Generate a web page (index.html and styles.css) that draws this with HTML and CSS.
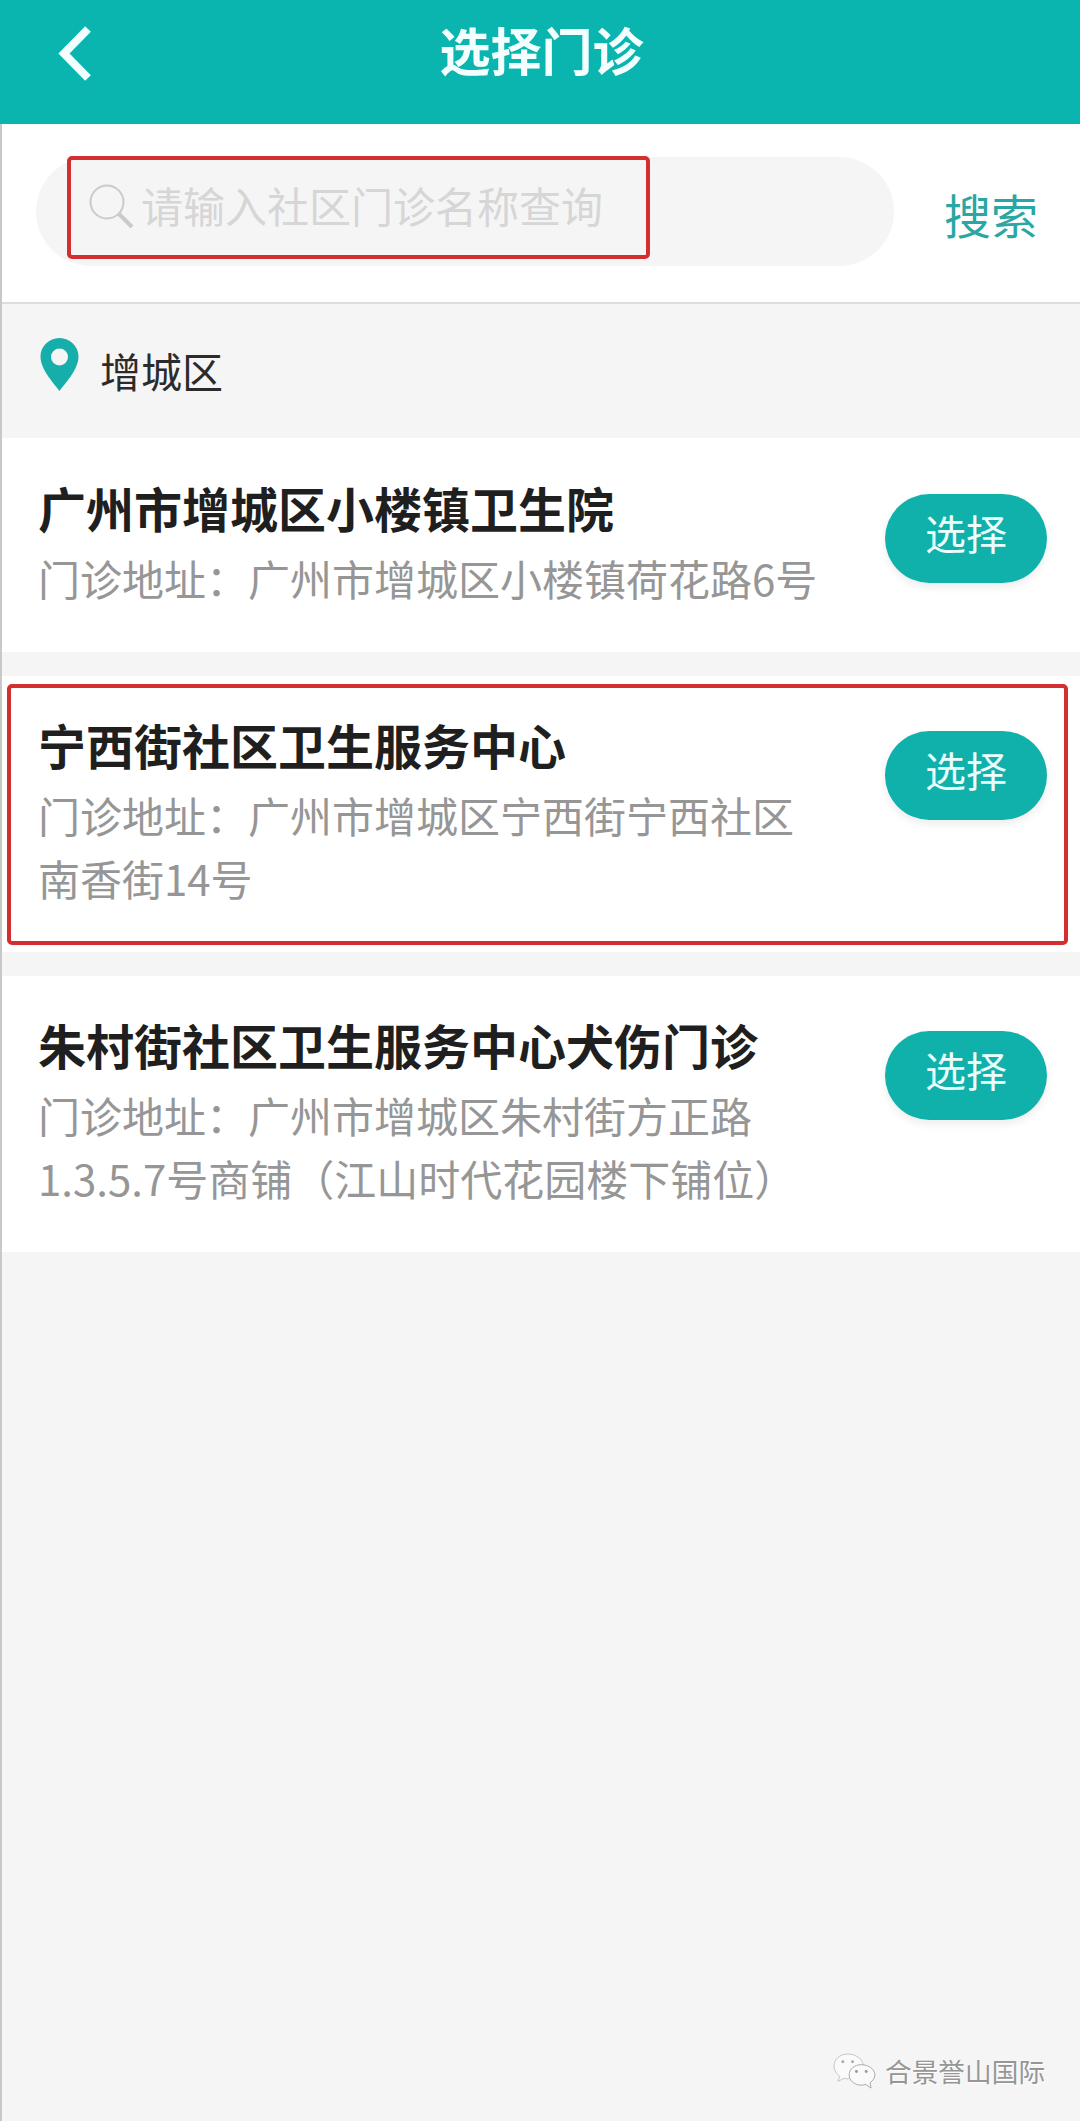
FILE: index.html
```html
<!DOCTYPE html>
<html lang="zh-CN">
<head>
    <meta charset="UTF-8">
    <meta name="viewport" content="width=device-width, initial-scale=1.0">
    <title>选择门诊</title>
    <link rel="stylesheet" href="styles.css">
</head>
<body>
    <header class="top-bar">
        <svg class="back-icon" viewBox="0 0 34 55" width="34" height="55">
            <path d="M30 3 L6 27.5 L30 52" fill="none" stroke="#f2fffe" stroke-width="8"/>
        </svg>
        <h1>选择门诊</h1>
    </header>
    <main class="page-body">
        <div class="search-row">
            <div class="search-box">
                <svg class="search-icon" viewBox="0 0 45 44" width="45" height="44">
                    <circle cx="18" cy="18" r="16.500" fill="none" stroke="#cacaca" stroke-width="2"/>
                    <path d="M30 30 L43 43" fill="none" stroke="#cacaca" stroke-width="4"/>
                </svg>
                <span class="search-hint">请输入社区门诊名称查询</span>
                <div class="red-box search-mark"></div>
            </div>
            <span class="search-btn">搜索</span>
        </div>
        <div class="area-row">
            <svg class="pin-icon" viewBox="0 0 38 53" width="39" height="53">
                <path fill-rule="evenodd" fill="#16aeaa" d="M19 0 C8.500 0 0 8.300 0 18.600 C0 31 12 44 19 53 C26 44 38 31 38 18.600 C38 8.300 29.500 0 19 0 Z M19 10.500 A8.500 8.500 0 1 1 19 27.500 A8.500 8.500 0 1 1 19 10.500 Z"/>
            </svg>
            <span class="area-name">增城区</span>
        </div>
        <section class="clinic clinic-first">
            <div class="clinic-info">
                <h3>广州市增城区小楼镇卫生院</h3>
                <p>门诊地址：广州市增城区小楼镇荷花路6号</p>
            </div>
            <button class="pick-btn">选择</button>
        </section>
        <section class="clinic">
            <div class="clinic-info">
                <h3>宁西街社区卫生服务中心</h3>
                <p>门诊地址：广州市增城区宁西街宁西社区南香街14号</p>
            </div>
            <button class="pick-btn">选择</button>
            <div class="red-box clinic-mark"></div>
        </section>
        <section class="clinic">
            <div class="clinic-info">
                <h3>朱村街社区卫生服务中心犬伤门诊</h3>
                <p>门诊地址：广州市增城区朱村街方正路1.3.5.7号商铺（江山时代花园楼下铺位）</p>
            </div>
            <button class="pick-btn">选择</button>
        </section>
    </main>
    <div class="watermark">
        <svg viewBox="0 0 44 38" width="43" height="37">
            <path d="M15 1 C7 1 1 6.500 1 13.500 C1 18 3.500 21.500 7 24 L5 29 L11.500 26 C13 26.500 14 26.600 15.500 26.600 L31 12 C29.500 5.500 23 1 15 1 Z" fill="#fafafa" stroke="#c4c4c4" stroke-width="1"/>
            <path d="M29 12 C22 12 16.500 16.500 16.500 22.500 C16.500 28.500 22 33 29 33 C30.500 33 32 32.800 33.500 32.300 L39 36 L38 30.500 C41 28.300 43 25.500 43 22.500 C43 16.500 36 12 29 12 Z" fill="#fafafa" stroke="#a8a8a8" stroke-width="1"/>
            <circle cx="10" cy="9" r="1.500" fill="#aaa"/>
            <circle cx="20" cy="9" r="1.500" fill="#aaa"/>
            <circle cx="24" cy="19" r="1.500" fill="#999"/>
            <circle cx="34" cy="19" r="1.500" fill="#999"/>
        </svg>
        <span>合景誉山国际</span>
    </div>
</body>
</html>
```

FILE: styles.css
```css
html, body {
    margin: 0;
    padding: 0;
}
body {
    position: relative;
    height: 2121px;
    overflow: hidden;
    background-color: #f5f5f5;
    font-family: "Noto Sans CJK SC", "Noto Sans", sans-serif;
}
.top-bar {
    display: flex;
    justify-content: center;
    align-items: center;
    position: relative;
    height: 124px;
    background-color: #0ab5b0;
}
.top-bar h1 {
    margin: -27px 0 0 3px;
    color: #f2fffe;
    font-size: 51px;
    font-weight: 700;
    line-height: 72px;
}
.back-icon {
    position: absolute;
    left: 58px;
    top: 26px;
}
.page-body {
    min-height: 1997px;
    border-left: 2px solid #c8c8c8;
}
.search-row {
    display: flex;
    align-items: flex-start;
    height: 180px;
    box-sizing: border-box;
    padding: 33px 0 0 34px;
    background-color: #fff;
    border-bottom: 2px solid #ddd;
}
.search-box {
    display: flex;
    align-items: center;
    position: relative;
    width: 858px;
    height: 109px;
    padding-left: 53px;
    box-sizing: border-box;
    border-radius: 55px;
    background-color: #f5f5f5;
}
.search-icon {
    margin: -11px 7px 0 0;
}
.search-hint {
    margin-top: -14px;
    color: #d6d6d6;
    font-size: 42px;
    line-height: 60px;
}
.search-btn {
    margin: 27px 0 0 50px;
    color: #2aa7a3;
    font-size: 47px;
    line-height: 60px;
}
.red-box {
    position: absolute;
    box-sizing: border-box;
    border: 4px solid #d32f2f;
    border-radius: 5px;
}
.search-mark {
    left: 31px;
    top: -1px;
    width: 583px;
    height: 103px;
}
.area-row {
    display: flex;
    align-items: flex-start;
    height: 134px;
    box-sizing: border-box;
    padding: 34px 0 0 38px;
}
.pin-icon {
    margin-right: 21px;
}
.area-name {
    margin-top: 2px;
    color: #2b2b2b;
    font-size: 41px;
    line-height: 60px;
}
.clinic {
    display: flex;
    justify-content: space-between;
    align-items: flex-start;
    position: relative;
    margin-bottom: 24px;
    padding: 37px 33px 43px 36px;
    background-color: #fff;
}
.clinic-first {
    padding-top: 38px;
}
.clinic-info {
    width: 790px;
}
.clinic-info h3 {
    margin: 0 0 8px 0;
    color: #1f1f1f;
    font-size: 48px;
    font-weight: 700;
    line-height: 62px;
}
.clinic-info p {
    margin: 0;
    color: #969696;
    font-size: 42px;
    line-height: 63px;
}
.pick-btn {
    width: 162px;
    height: 89px;
    margin-top: 18px;
    padding: 0 0 13px 0;
    border: none;
    border-radius: 45px;
    background-color: #11b1ab;
    box-shadow: 0 4px 8px rgba(0, 0, 0, 0.08);
    color: #eafffd;
    font-family: inherit;
    font-size: 41px;
    line-height: 60px;
}
.clinic-mark {
    left: 5px;
    top: 8px;
    width: 1061px;
    height: 261px;
}
.watermark {
    display: flex;
    align-items: center;
    position: absolute;
    left: 833px;
    top: 2052px;
    gap: 9px;
    color: #969696;
    font-size: 26.7px;
    line-height: 38px;
    text-shadow: 1px 1px 0 #fff;
}
```
